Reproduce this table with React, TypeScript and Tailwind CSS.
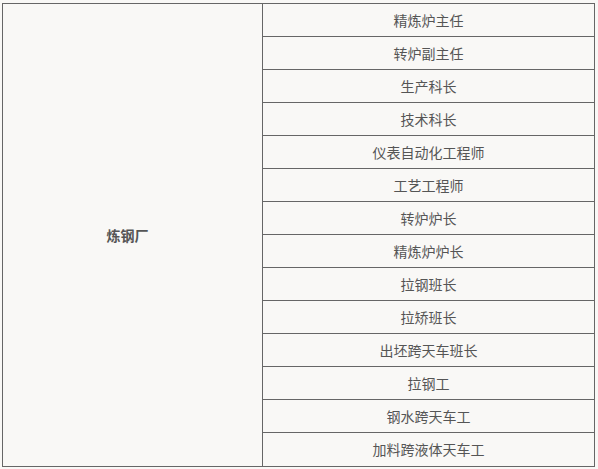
const roles = [
  "精炼炉主任",
  "转炉副主任",
  "生产科长",
  "技术科长",
  "仪表自动化工程师",
  "工艺工程师",
  "转炉炉长",
  "精炼炉炉长",
  "拉钢班长",
  "拉矫班长",
  "出坯跨天车班长",
  "拉钢工",
  "钢水跨天车工",
  "加料跨液体天车工",
];

export default function App() {
  return (
    <div
      className="w-[598px] h-[469px] bg-[#f9f8f6] pt-[3px] pl-[2px] text-[14px] text-[#555]"
      style={{ fontFamily: '"Noto Sans CJK SC", "Noto Sans", sans-serif' }}
    >
      <div className="flex w-[593px] border border-[#666]">
        <div className="w-[260px] flex items-center justify-center pr-[10px] border-r border-[#666] font-bold">
          炼钢厂
        </div>
        <div className="flex-1 flex flex-col">
          {roles.map((r, i) => (
            <div
              key={r}
              className={`h-[33px] flex items-center justify-center ${i < roles.length - 1 ? "border-b border-[#666]" : "h-[32px]"}`}
            >
              {r}
            </div>
          ))}
        </div>
      </div>
    </div>
  );
}
